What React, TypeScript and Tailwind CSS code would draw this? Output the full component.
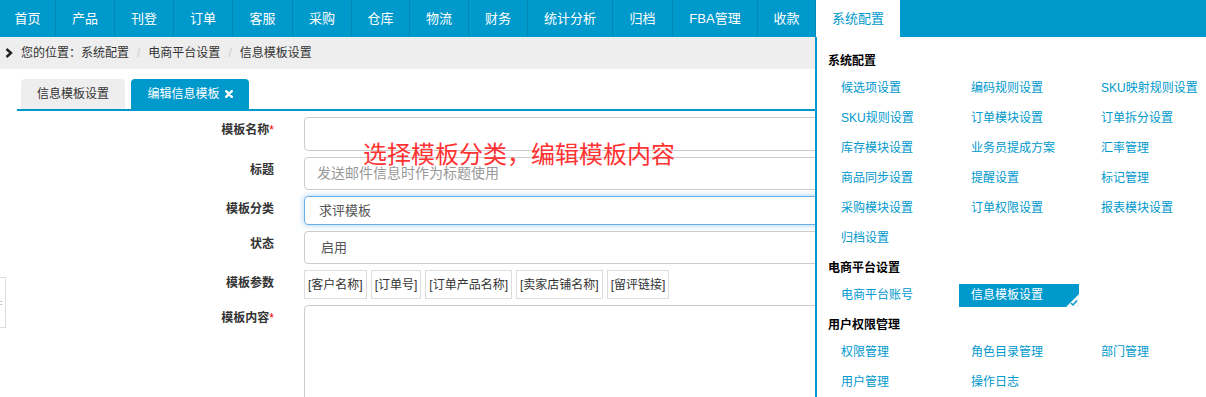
import { ReactNode } from 'react'

const navItems = [
  { label: '首页', w: 'w-[56px]' },
  { label: '产品', w: 'w-[59px]' },
  { label: '刊登', w: 'w-[59px]' },
  { label: '订单', w: 'w-[59px]' },
  { label: '客服', w: 'w-[60px]' },
  { label: '采购', w: 'w-[59px]' },
  { label: '仓库', w: 'w-[58px]' },
  { label: '物流', w: 'w-[59px]' },
  { label: '财务', w: 'w-[59px]' },
  { label: '统计分析', w: 'w-[85px]' },
  { label: '归档', w: 'w-[60px]' },
  { label: 'FBA管理', w: 'w-[85px]' },
  { label: '收款', w: 'w-[58px]' },
]

const menuGroups = [
  {
    title: '系统配置',
    items: [
      '候选项设置', '编码规则设置', 'SKU映射规则设置',
      'SKU规则设置', '订单模块设置', '订单拆分设置',
      '库存模块设置', '业务员提成方案', '汇率管理',
      '商品同步设置', '提醒设置', '标记管理',
      '采购模块设置', '订单权限设置', '报表模块设置',
      '归档设置',
    ],
  },
  { title: '电商平台设置', items: ['电商平台账号', '信息模板设置'] },
  { title: '用户权限管理', items: ['权限管理', '角色目录管理', '部门管理', '用户管理', '操作日志'] },
]

const params = ['[客户名称]', '[订单号]', '[订单产品名称]', '[卖家店铺名称]', '[留评链接]']

function FormRow({ label, required, children }: { label: string; required?: boolean; children: ReactNode }) {
  return (
    <div className="flex mb-[6px]">
      <div className="w-[274px] shrink-0 text-right pt-[6px] text-[12px] leading-[14px] font-bold text-[#333]">
        {label}
        {required && <span className="text-[#e00] font-normal">*</span>}
      </div>
      <div className="ml-[30px]">{children}</div>
    </div>
  )
}

export default function App() {
  return (
    <div
      className="relative w-[1206px] h-[397px] overflow-hidden bg-white"
      style={{ fontFamily: '"Liberation Sans", "Noto Sans CJK SC", sans-serif' }}
    >
      {/* top nav */}
      <nav className="flex h-[37px] bg-[#0099cc]">
        {navItems.map((item) => (
          <div
            key={item.label}
            className={`${item.w} shrink-0 flex items-center justify-center border-r border-[#0087b5] text-white text-[13px]`}
          >
            {item.label}
          </div>
        ))}
        <div className="w-[84px] shrink-0 flex items-center justify-center bg-white text-[#0099cc] text-[13px]">
          系统配置
        </div>
      </nav>

      {/* breadcrumb */}
      <div className="flex items-center h-[32px] bg-[#eeeeee] text-[12px] text-[#333]">
        <svg width="8" height="10" viewBox="0 0 8 10" className="ml-[5px] mr-[8px]">
          <path d="M1.5 1 L6 5 L1.5 9" stroke="#222" strokeWidth="2.4" fill="none" />
        </svg>
        <span>您的位置：系统配置</span>
        <span className="px-[8px] text-[#ccc]">/</span>
        <span>电商平台设置</span>
        <span className="px-[8px] text-[#ccc]">/</span>
        <span>信息模板设置</span>
      </div>

      {/* tabs */}
      <div className="mt-[10px] ml-[17px] w-[799px] flex items-end gap-[6px] border-b-2 border-[#0099cc] pl-[4px]">
        <div className="h-[30px] w-[104px] flex items-center justify-center rounded-t-[4px] bg-[#eeeeee] text-[12px] text-[#333]">
          信息模板设置
        </div>
        <div className="h-[30px] w-[118px] flex items-center justify-center gap-[5px] rounded-t-[4px] bg-[#0099cc] text-[12px] text-white">
          编辑信息模板
          <svg width="8" height="8" viewBox="0 0 8 8">
            <path d="M1.2 1.2 L6.8 6.8 M6.8 1.2 L1.2 6.8" stroke="#fff" strokeWidth="2.4" strokeLinecap="round" />
          </svg>
        </div>
      </div>

      {/* form */}
      <div className="mt-[6px]">
        <FormRow label="模板名称" required>
          <div className="w-[530px] h-[34px] rounded-[4px] border border-[#ccc]" />
        </FormRow>
        <FormRow label="标题">
          <div className="w-[530px] h-[33px] rounded-[4px] border border-[#ccc] flex items-center pl-[12px] text-[14px] text-[#999]">
            发送邮件信息时作为标题使用
          </div>
        </FormRow>
        <FormRow label="模板分类">
          <div className="w-[530px] h-[29px] rounded-[4px] border border-[#66afe9] shadow-[0_0_6px_rgba(102,175,233,0.6)] flex items-center pl-[14px] text-[13px] text-[#555]">
            求评模板
          </div>
        </FormRow>
        <FormRow label="状态">
          <div className="w-[530px] h-[33px] rounded-[4px] border border-[#ccc] flex items-center pl-[16px] text-[13px] text-[#555]">
            启用
          </div>
        </FormRow>
        <FormRow label="模板参数">
          <div className="flex gap-[4px]">
            {params.map((p) => (
              <div
                key={p}
                className="h-[29px] px-[3px] flex items-center border border-[#ddd] text-[12px] text-[#333]"
              >
                {p}
              </div>
            ))}
          </div>
        </FormRow>
        <FormRow label="模板内容" required>
          <div className="w-[530px] h-[140px] rounded-[4px] border border-[#ccc]" />
        </FormRow>
      </div>

      {/* annotation */}
      <div className="absolute left-[363px] top-[140px] text-[24px] leading-[30px] text-[#ff3333]">
        选择模板分类，编辑模板内容
      </div>

      {/* left collapse handle */}
      <div className="absolute left-0 top-[277px] w-[6px] h-[51px] border-y border-r border-[#ddd] flex items-center">
        <span className="text-[8px] leading-none text-[#333]">:</span>
      </div>

      {/* dropdown panel */}
      <div className="absolute left-[815px] top-[37px] bottom-0 w-[391px] bg-white border-l-2 border-[#0099cc] pt-[12px] pl-[11px]">
        {menuGroups.map((group, gi) => (
          <div key={group.title} className={gi > 0 ? 'mt-[3px]' : ''}>
            <div className="h-[24px] flex items-center text-[12px] font-bold text-black">{group.title}</div>
            <div className="grid grid-cols-[130px_130px_130px] ml-[1px]">
              {group.items.map((item) => {
                const active = item === '信息模板设置'
                return (
                  <div key={item} className="h-[30px] flex items-center">
                    <div
                      className={`relative w-[120px] h-[23px] pl-[12px] flex items-center text-[12px] ${
                        active ? 'bg-[#0099cc] text-white' : 'text-[#0099cc]'
                      }`}
                    >
                      {item}
                      {active && (
                        <svg width="13" height="13" viewBox="0 0 13 13" className="absolute right-0 bottom-0">
                          <polygon points="13,0 13,13 0,13" fill="#f4f8fa" />
                          <path d="M5 9 L7 11 L11 6.5" stroke="#0099cc" strokeWidth="1.4" fill="none" />
                        </svg>
                      )}
                    </div>
                  </div>
                )
              })}
            </div>
          </div>
        ))}
      </div>
    </div>
  )
}
